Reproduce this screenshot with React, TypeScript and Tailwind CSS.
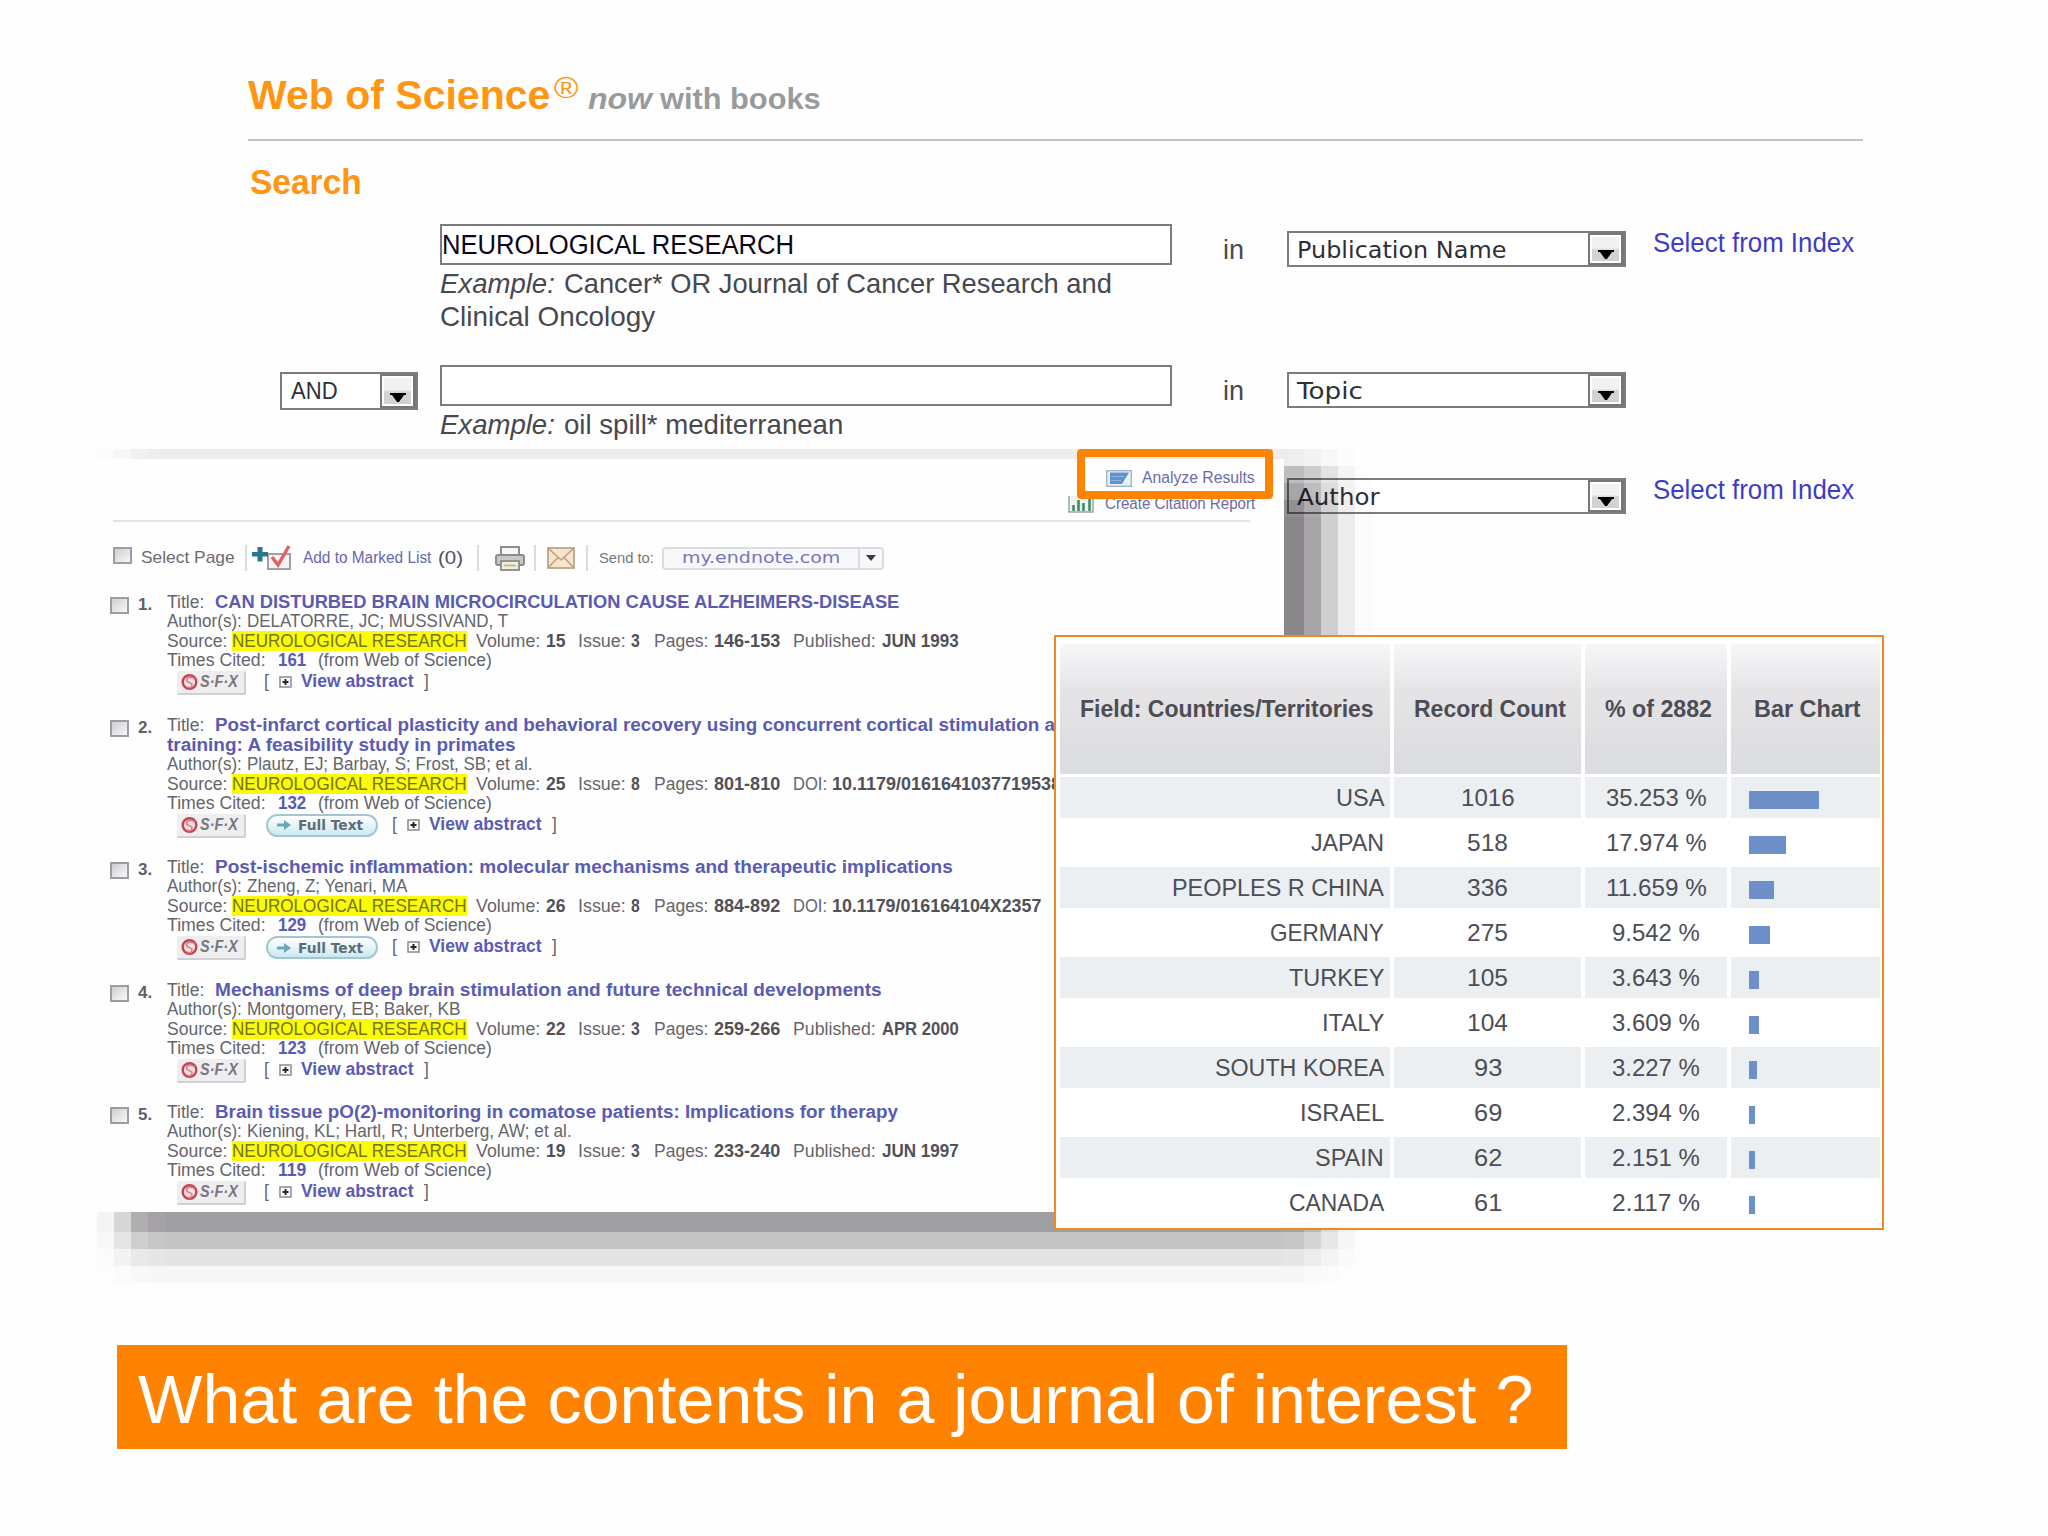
import React, { useLayoutEffect, useRef } from 'react';

interface FitProps {
  className?: string;
  children: React.ReactNode;
}

// Stretches or squeezes a line of text to the width of its box
const Fit: React.FC<FitProps> = ({ className = '', children }) => {
  const box = useRef<HTMLSpanElement>(null);
  const text = useRef<HTMLSpanElement>(null);

  useLayoutEffect(() => {
    if (box.current && text.current) {
      text.current.style.transform = `scaleX(${box.current.clientWidth / text.current.offsetWidth})`;
    }
  });

  return (
    <span ref={box} className={`inline-block shrink-0 whitespace-nowrap ${className}`}>
      <span ref={text} className="inline-block origin-left whitespace-nowrap">{children}</span>
    </span>
  );
};

interface SelectBoxProps {
  label: string;
  className: string;
  textClass: string;
}

const SelectBox: React.FC<SelectBoxProps> = ({ label, className, textClass }) => (
  <div className={`flex items-stretch justify-between border-2 border-[#7c7c7e] bg-white text-[#2f2f38] ${className}`}>
    <Fit className={textClass}>{label}</Fit>
    <div className="w-[36px] shrink-0 border-l-2 border-t-2 border-r-[3px] border-b-2 border-[#77777a] bg-white p-[2px]">
      <div className="flex h-full items-end justify-center bg-linear-to-b from-[#f1f1f3] from-45% to-[#d2d2d5] to-55% pb-[2px]">
        <svg width="16" height="9" viewBox="0 0 16 9"><path d="M0 0h16v2h-2L9 9H7L2 2H0z" fill="#000" /></svg>
      </div>
    </div>
  </div>
);

interface SearchRowProps {
  operator?: boolean;
  value?: string;
  example?: React.ReactNode;
  field: string;
  fieldClass: string;
  index?: boolean;
  className: string;
}

const SearchRow: React.FC<SearchRowProps> = ({ operator, value, example, field, fieldClass, index, className }) => (
  <div className={`flex items-start pl-[280px] ${className}`}>
    <div className="w-[160px] shrink-0 pt-[7px]">
      {operator && <SelectBox label="AND" className="h-[38px] w-[138px]" textClass="ml-[9px] w-[47px] text-[23px] leading-[34px]" />}
    </div>
    <div className="w-[732px] shrink-0">
      {example && (
        <>
          <div className="h-[41px] border-2 border-[#7c7c7e] bg-white text-[27px] leading-[38px] text-[#0c0718]">
            {value && <Fit className="w-[352px]">{value}</Fit>}
          </div>
          <div className="mt-[2px] text-[28.5px] leading-[33px] text-[#48484f]">{example}</div>
        </>
      )}
    </div>
    <div className="w-[115px] shrink-0 pl-[51px] pt-[8px] text-[27px] leading-[36px] text-[#48484f]">
      {example && <Fit className="w-[21px]">in</Fit>}
    </div>
    <div className="w-[366px] shrink-0 pt-[7px] font-['DejaVu_Sans',sans-serif]">
      <SelectBox label={field} className="h-[36px] w-[339px]" textClass={`ml-[8px] text-[23px] leading-[35px] ${fieldClass}`} />
    </div>
    {index && <Fit className="mt-[1px] w-[201px] text-[27px] leading-[36px] text-[#3d3dc4]">Select from Index</Fit>}
  </div>
);

const Checkbox = () => (
  <div className="h-[17px] w-[19px] shrink-0 border-2 border-[#9c9ca2] bg-linear-to-br from-[#cfcfd3] to-[#f8f8f8]" />
);

const Separator = ({ className }: { className: string }) => (
  <div className={`h-[26px] w-[2px] shrink-0 bg-[#dcdce0] ${className}`} />
);

const SfxButton = () => (
  <div className="flex h-6 w-[69px] items-center rounded-[2px] border-b-2 border-r-2 border-[#d0d0d4] bg-[#eeeef0] pl-1">
    <svg width="17" height="18" viewBox="0 0 17 18" fill="none">
      <circle cx="8.5" cy="9" r="6.8" fill="#f8dfe2" stroke="#c2444f" strokeWidth="2.4" />
      <path d="M14 6C10 3 6 4 5.500 7s5.500 2 5.500 5-3 3-5 2" stroke="#d9808a" strokeWidth="1.600" />
    </svg>
    <Fit className="ml-[2px] w-[38px] text-[16px] font-bold italic leading-[22px] text-[#77777e]">S·F·X</Fit>
  </div>
);

const FullTextButton = () => (
  <div className="ml-5 flex h-[23px] w-[112px] items-center rounded-full border-2 border-[#a3c6d2] bg-linear-to-b from-[#ffffff] to-[#cbe9f1] pl-[9px]">
    <svg width="14" height="10" viewBox="0 0 14 10"><path d="M0 3.500h7V0l7 5-7 5V6.500H0z" fill="#6aa9b8" /></svg>
    <Fit className="ml-[7px] w-[65px] font-['DejaVu_Sans',sans-serif] text-[14px] font-bold leading-[18px] text-[#606b76]">Full Text</Fit>
  </div>
);

interface Article {
  title: string;
  titleClass: string;
  titleRest?: string;
  authors: string;
  authorsClass: string;
  volume: string;
  issue: string;
  pages: string;
  published?: string;
  doi?: string;
  doiClass?: string;
  cited: string;
  fullText?: boolean;
}

const articles: Article[] = [
  {
    title: 'CAN DISTURBED BRAIN MICROCIRCULATION CAUSE ALZHEIMERS-DISEASE', titleClass: 'w-[684px]',
    authors: 'DELATORRE, JC; MUSSIVAND, T', authorsClass: 'w-[261px]',
    volume: '15', issue: '3', pages: '146-153', published: 'JUN 1993', cited: '161',
  },
  {
    title: 'Post-infarct cortical plasticity and behavioral recovery using concurrent cortical stimulation a', titleClass: 'w-[840px]',
    titleRest: 'training: A feasibility study in primates',
    authors: 'Plautz, EJ; Barbay, S; Frost, SB; et al.', authorsClass: 'w-[285px]',
    volume: '25', issue: '8', pages: '801-810', doi: '10.1179/0161641037719538', doiClass: 'w-[229px]', cited: '132', fullText: true,
  },
  {
    title: 'Post-ischemic inflammation: molecular mechanisms and therapeutic implications', titleClass: 'w-[738px]',
    authors: 'Zheng, Z; Yenari, MA', authorsClass: 'w-[160px]',
    volume: '26', issue: '8', pages: '884-892', doi: '10.1179/016164104X2357', doiClass: 'w-[209px]', cited: '129', fullText: true,
  },
  {
    title: 'Mechanisms of deep brain stimulation and future technical developments', titleClass: 'w-[667px]',
    authors: 'Montgomery, EB; Baker, KB', authorsClass: 'w-[214px]',
    volume: '22', issue: '3', pages: '259-266', published: 'APR 2000', cited: '123',
  },
  {
    title: 'Brain tissue pO(2)-monitoring in comatose patients: Implications for therapy', titleClass: 'w-[683px]',
    authors: 'Kiening, KL; Hartl, R; Unterberg, AW; et al.', authorsClass: 'w-[325px]',
    volume: '19', issue: '3', pages: '233-240', published: 'JUN 1997', cited: '119',
  },
];

const ArticleItem: React.FC<{ article: Article; number: number }> = ({ article, number }) => (
  <div className="flex items-start pl-[13px] text-[17.5px] text-[#65656b]">
    <div className="mt-[5px]"><Checkbox /></div>
    <div className="ml-[9px] mt-[3px] w-[29px] shrink-0 text-[17px] font-bold leading-[20px] text-[#606066]">{number}.</div>
    <div className="shrink-0">
      <div className="flex h-5 leading-5">
        <Fit className="w-[37px]">Title:</Fit>
        <Fit className={`ml-[11px] font-bold text-[#5a5cb2] ${article.titleClass}`}>{article.title}</Fit>
      </div>
      {article.titleRest && (
        <div className="h-5 leading-5"><Fit className="w-[349px] font-bold text-[#5a5cb2]">{article.titleRest}</Fit></div>
      )}
      <div className="flex h-[19px] leading-[19px]">
        <Fit className="w-[75px]">Author(s):</Fit>
        <Fit className={`ml-[5px] ${article.authorsClass}`}>{article.authors}</Fit>
      </div>
      <div className="flex h-5 leading-5">
        <Fit className="w-[60px]">Source:</Fit>
        <Fit className="ml-[5px] w-[235px] bg-[#fbfb08] text-[#74741a]">NEUROLOGICAL RESEARCH</Fit>
        <Fit className="ml-[9px] w-[64px]">Volume:</Fit>
        <Fit className="ml-[6px] w-[19px] font-bold text-[#515157]">{article.volume}</Fit>
        <Fit className="ml-[13px] w-[48px]">Issue:</Fit>
        <Fit className="ml-[5px] w-[9px] font-bold text-[#515157]">{article.issue}</Fit>
        <Fit className="ml-[14px] w-[54px]">Pages:</Fit>
        <Fit className="ml-[6px] w-[66px] font-bold text-[#515157]">{article.pages}</Fit>
        {article.published && (
          <>
            <Fit className="ml-[13px] w-[83px]">Published:</Fit>
            <Fit className="ml-[6px] w-[77px] font-bold text-[#515157]">{article.published}</Fit>
          </>
        )}
        {article.doi && (
          <>
            <Fit className="ml-[13px] w-[34px]">DOI:</Fit>
            <Fit className={`ml-[5px] font-bold text-[#515157] ${article.doiClass}`}>{article.doi}</Fit>
          </>
        )}
      </div>
      <div className="flex h-5 leading-[19px]">
        <Fit className="w-[99px]">Times Cited:</Fit>
        <Fit className="ml-[12px] w-[28px] font-bold text-[#5a5cb2]">{article.cited}</Fit>
        <Fit className="ml-[12px] w-[174px]">(from Web of Science)</Fit>
      </div>
      <div className="flex h-6 items-start pl-[10px] leading-[21px]">
        <SfxButton />
        {article.fullText && <FullTextButton />}
        <div className={`flex items-start ${article.fullText ? 'ml-[14px]' : 'ml-[18px]'}`}>
          <span className="w-[15px]">[</span>
          <svg className="mt-[5px]" width="13" height="12" viewBox="0 0 13 12" fill="none">
            <rect x="1" y="1" width="11" height="10" fill="#fff" stroke="#8a8a90" strokeWidth="1.500" />
            <path d="M3.500 6h6M6.500 3v6" stroke="#26262c" strokeWidth="2" />
          </svg>
          <Fit className="ml-[9px] w-[113px] font-bold text-[#5a5cb2]">View abstract</Fit>
          <span className="ml-[10px]">]</span>
        </div>
      </div>
    </div>
  </div>
);

const ResultsPanel = () => (
  <div className="absolute left-[97px] top-[459px] h-[753px] w-[1187px] overflow-hidden bg-[#fefefe] pt-[6px]">
    <div className="flex h-[26px] items-center justify-end pr-[29px] text-[16px] leading-[26px] text-[#6b6ba6]">
      <svg width="26" height="17" viewBox="0 0 26 17" fill="none">
        <rect x="0.750" y="0.750" width="24.500" height="15.500" fill="#eef3f9" stroke="#a5b6cb" strokeWidth="1.500" />
        <path d="M4 2.500h19L16 14H4z" fill="#5e93cb" />
        <path d="M5 6.500h13M5 10.500h10" stroke="#8fb5de" strokeWidth="1.200" />
      </svg>
      <Fit className="ml-[10px] w-[113px]">Analyze Results</Fit>
    </div>
    <div className="flex h-[26px] items-center justify-end pr-[29px] text-[16px] leading-[28px] text-[#6b6ba6]">
      <svg width="26" height="17" viewBox="0 0 26 17" fill="none">
        <path d="M1 0v16h24V0" fill="#eff6f1" stroke="#95a89c" strokeWidth="1.500" />
        <path d="M5.500 15V9M10.500 15V4M15.500 15V7M21.500 15V2" stroke="#458a66" strokeWidth="2.600" />
      </svg>
      <Fit className="ml-[11px] w-[150px]">Create Citation Report</Fit>
    </div>
    <div className="ml-4 mt-[3px] h-[2px] w-[1137px] bg-[#e3e3e7]" />

    {/* Toolbar */}
    <div className="mt-[23px] flex h-[26px] items-center pl-4 text-[17px] leading-[26px] text-[#6b6b70]">
      <div className="-mt-[5px]"><Checkbox /></div>
      <Fit className="ml-[9px] w-[94px]">Select Page</Fit>
      <Separator className="ml-[10px]" />
      <svg className="ml-[5px]" width="40" height="26" viewBox="0 0 40 26" fill="none">
        <rect x="16" y="9" width="22" height="15" fill="#f3f3f5" stroke="#a0a0a6" strokeWidth="2" />
        <path d="M5.500 2h5v5H16v4.500h-5.500v5h-5v-5H0V7h5.500z" fill="#2b7690" />
        <path d="M20 12l6 8L37 1" stroke="#e0625c" strokeWidth="3.400" />
      </svg>
      <Fit className="ml-[11px] w-[128px] text-[16px] text-[#6567b2]">Add to Marked List</Fit>
      <Fit className="ml-[7px] w-[25px] text-[18px] text-[#505056]">(0)</Fit>
      <Separator className="ml-[14px]" />
      <svg className="ml-4" width="30" height="25" viewBox="0 0 30 25" fill="none">
        <rect x="6" y="1" width="18" height="9" fill="#f7f7f7" stroke="#8e8e92" strokeWidth="2" />
        <rect x="1" y="9" width="28" height="10" rx="2" fill="#c9c9c6" stroke="#8c8c8e" strokeWidth="2" />
        <rect x="6" y="15" width="18" height="9" fill="#f2efe2" stroke="#94948f" strokeWidth="2" />
        <path d="M9 19.500h12" stroke="#c9b988" strokeWidth="2" />
      </svg>
      <Separator className="ml-[9px]" />
      <svg className="ml-[11px]" width="28" height="22" viewBox="0 0 28 22" fill="none">
        <rect x="1" y="1" width="26" height="20" fill="#f8e4c8" stroke="#b9a68c" strokeWidth="1.800" />
        <path d="M1 1l13 12L27 1M1 21l10-10.500M27 21L17 10.500" stroke="#b9a08a" strokeWidth="1.600" />
      </svg>
      <Separator className="ml-[11px]" />
      <Fit className="ml-[11px] w-[55px] text-[15px] text-[#77777c]">Send to:</Fit>
      <div className="ml-[8px] flex h-[23px] w-[222px] items-stretch rounded-[4px] border-2 border-[#dbdbe2] bg-[#f8f8fb]">
        <Fit className="ml-[18px] w-[158px] font-['DejaVu_Sans',sans-serif] text-[16px] leading-[18px] text-[#7576ba]">my.endnote.com</Fit>
        <div className="ml-[18px] flex flex-1 items-center justify-center border-l-2 border-[#dbdbe2]">
          <svg width="10" height="6" viewBox="0 0 10 6"><path d="M0 0h10L5 6z" fill="#3c3c40" /></svg>
        </div>
      </div>
    </div>

    <div className="mt-[21px] flex flex-col gap-[19.5px]">
      {articles.map((article, idx) => (
        <ArticleItem key={idx} article={article} number={idx + 1} />
      ))}
    </div>
  </div>
);

// Blocky drop shadow: darkness is the product of the column and row strength
const shadowCols = [0.01, 0.1, 0.42, 0.84, 0.95, 1, 0.95, 0.71, 0.38, 0.14, 0.02];
const shadowRows = [0.01, 0.13, 0.55, 0.75, 0.93, 1, 0.77, 0.46, 0.2, 0.06, 0.01];

const PanelShadow = () => (
  <div className="absolute left-[80px] top-[432px] grid grid-cols-[17px_17px_17px_17px_17px_1119px_20px_17px_17px_17px_17px] grid-rows-[17px_17px_17px_17px_17px_695px_20px_17px_17px_17px_17px]">
    {shadowRows.map((row, r) =>
      shadowCols.map((col, c) => (
        <div key={`${r}-${c}`} className="bg-[#09040a]" style={{ opacity: 0.5 * row * col }} />
      ))
    )}
  </div>
);

const countries = [
  { name: 'USA', nameClass: 'w-[48px]', count: '1016', countClass: 'w-[54px]', share: '35.253 %', shareClass: 'w-[101px]', bar: 70 },
  { name: 'JAPAN', nameClass: 'w-[73px]', count: '518', countClass: 'w-[41px]', share: '17.974 %', shareClass: 'w-[101px]', bar: 37 },
  { name: 'PEOPLES R CHINA', nameClass: 'w-[212px]', count: '336', countClass: 'w-[41px]', share: '11.659 %', shareClass: 'w-[101px]', bar: 25 },
  { name: 'GERMANY', nameClass: 'w-[114px]', count: '275', countClass: 'w-[41px]', share: '9.542 %', shareClass: 'w-[88px]', bar: 21 },
  { name: 'TURKEY', nameClass: 'w-[95px]', count: '105', countClass: 'w-[41px]', share: '3.643 %', shareClass: 'w-[88px]', bar: 10 },
  { name: 'ITALY', nameClass: 'w-[62px]', count: '104', countClass: 'w-[41px]', share: '3.609 %', shareClass: 'w-[88px]', bar: 10 },
  { name: 'SOUTH KOREA', nameClass: 'w-[169px]', count: '93', countClass: 'w-[28px]', share: '3.227 %', shareClass: 'w-[88px]', bar: 8 },
  { name: 'ISRAEL', nameClass: 'w-[84px]', count: '69', countClass: 'w-[28px]', share: '2.394 %', shareClass: 'w-[88px]', bar: 6 },
  { name: 'SPAIN', nameClass: 'w-[69px]', count: '62', countClass: 'w-[28px]', share: '2.151 %', shareClass: 'w-[88px]', bar: 6 },
  { name: 'CANADA', nameClass: 'w-[95px]', count: '61', countClass: 'w-[28px]', share: '2.117 %', shareClass: 'w-[88px]', bar: 6 },
];

const columns = [
  { label: 'Field: Countries/Territories', className: 'w-[294px]' },
  { label: 'Record Count', className: 'w-[152px]' },
  { label: '% of 2882', className: 'w-[107px]' },
  { label: 'Bar Chart', className: 'w-[107px]' },
];

const CountriesTable = () => (
  <div className="absolute left-[1054px] top-[635px] h-[595px] w-[830px] border-2 border-[#ee8a26] bg-white pl-[4px] pt-[7px] text-[24.5px] text-[#4d4d55]">
    <div className="grid grid-cols-[330px_187px_142px_149px] gap-x-[4px]">
      {columns.map((column) => (
        <div key={column.label} className="flex h-[130px] items-center justify-center bg-linear-to-b from-[#f7f6f8] via-[#e5e3e6] via-37% to-[#dadcdf] pl-[4px] font-bold">
          <Fit className={column.className}>{column.label}</Fit>
        </div>
      ))}
    </div>
    <div className="mt-[3px] flex flex-col gap-[4px]">
      {countries.map((country, idx) => {
        const cell = idx % 2 === 0 ? 'bg-[#eceff1]' : 'bg-white';
        return (
          <div key={country.name} className="grid h-[41px] grid-cols-[330px_187px_142px_149px] gap-x-[4px] leading-[41px]">
            <div className={`flex justify-end pr-[6px] ${cell}`}><Fit className={country.nameClass}>{country.name}</Fit></div>
            <div className={`flex justify-center ${cell}`}><Fit className={country.countClass}>{country.count}</Fit></div>
            <div className={`flex justify-center ${cell}`}><Fit className={country.shareClass}>{country.share}</Fit></div>
            <div className={`pl-[18px] pt-[14px] ${cell}`}>
              <div className="h-[18px] bg-[#6d90c8]" style={{ width: country.bar }} />
            </div>
          </div>
        );
      })}
    </div>
  </div>
);

const App = () => (
  <div className="relative h-[1536px] w-[2048px] overflow-hidden bg-[#fefefe] pt-[65px] font-['Liberation_Sans',Arial,sans-serif]">
    <div className="flex h-[60px] pl-[248px] leading-[60px]">
      <Fit className="w-[302px] text-[41px] font-bold text-[#ff9510]">Web of Science</Fit>
      <Fit className="-mt-[7px] ml-[4px] w-[24px] text-[29px] text-[#ff9510]">®</Fit>
      <div className="ml-[10px] flex pt-[4px] text-[30px] font-bold text-[#989b9c]">
        <Fit className="w-[64px] italic">now</Fit>
        <Fit className="ml-[8px] w-[161px]">with books</Fit>
      </div>
    </div>
    <div className="ml-[248px] mt-[14px] h-[2px] w-[1615px] bg-[#c4c4c6]" />
    <div className="mt-[21px] h-[40px] pl-[250px] text-[35px] font-bold leading-[40px] text-[#ff9510]">
      <Fit className="w-[112px]">Search</Fit>
    </div>

    <div className="mt-[22px]">
      <SearchRow
        className="h-[141px]"
        value="NEUROLOGICAL RESEARCH"
        example={
          <>
            <div className="flex">
              <Fit className="w-[115px] italic">Example:</Fit>
              <Fit className="ml-[9px] w-[548px]">Cancer* OR Journal of Cancer Research and</Fit>
            </div>
            <Fit className="w-[215px]">Clinical Oncology</Fit>
          </>
        }
        field="Publication Name"
        fieldClass="w-[209px]"
        index
      />
      <SearchRow
        className="h-[106px]"
        operator
        example={
          <div className="flex">
            <Fit className="w-[115px] italic">Example:</Fit>
            <Fit className="ml-[9px] w-[279px]">oil spill* mediterranean</Fit>
          </div>
        }
        field="Topic"
        fieldClass="w-[66px]"
      />
      <SearchRow className="h-[60px]" field="Author" fieldClass="w-[82px]" index />
    </div>

    <PanelShadow />
    <ResultsPanel />
    <div className="absolute left-[1077px] top-[449px] h-[50px] w-[196px] rounded-[4px] border-[8px] border-[#ff8200]" />
    <CountriesTable />

    <div className="absolute left-[117px] top-[1345px] flex h-[104px] w-[1450px] items-center bg-[#ff8200] pl-[21px] pt-[5px] text-[69px] leading-[100px] text-white">
      <Fit className="w-[1395px]">What are the contents in a journal of interest ?</Fit>
    </div>
  </div>
);

export default App;
